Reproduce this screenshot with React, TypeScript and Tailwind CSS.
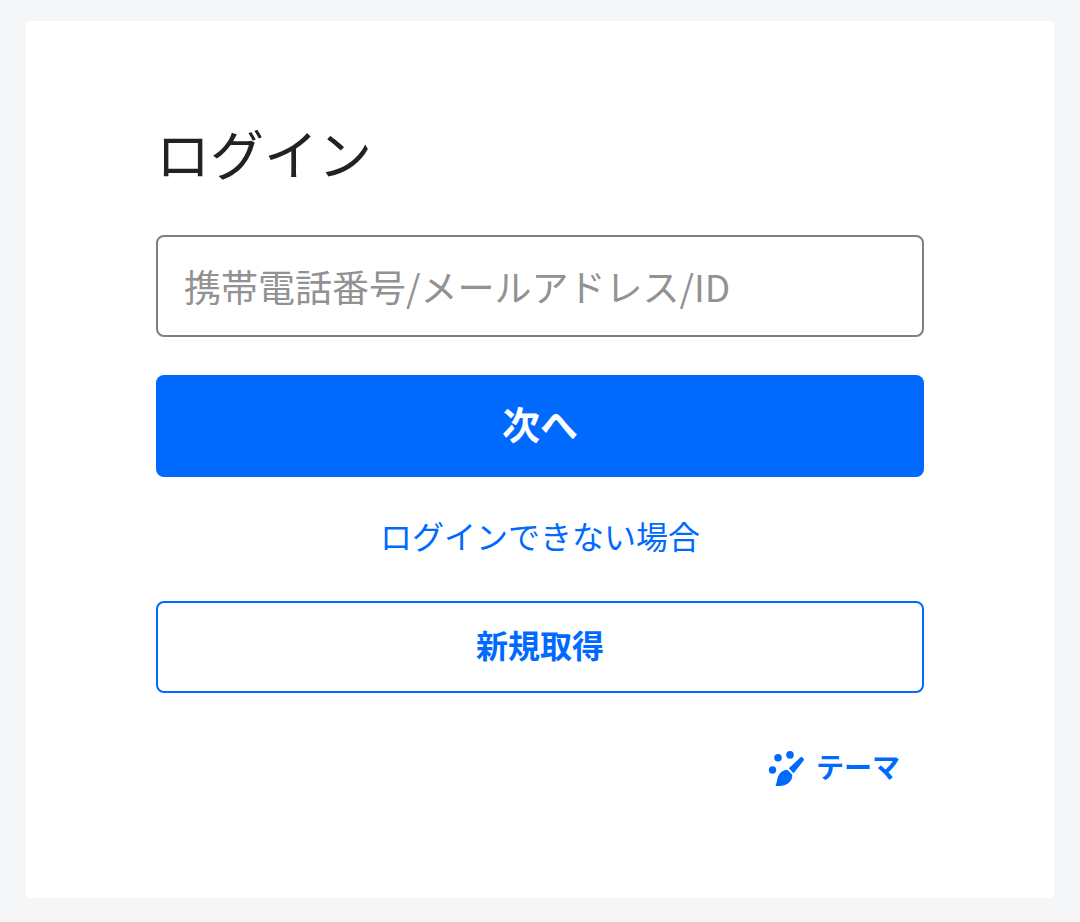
import { useState } from "react";

function BrushIcon() {
  return (
    <svg viewBox="0 0 36 36" className="h-9 w-9 shrink-0" fill="currentColor" aria-hidden="true">
      <circle cx="4.5" cy="19" r="3.7" />
      <circle cx="10" cy="6.8" r="3.8" />
      <circle cx="22" cy="3.9" r="3.8" />
      <path d="M32.600 6.200q1-.8 1.800.1l1.300 1.600q.6.900-.1 1.700L25.600 22.200l-4.800-4.900z" />
      <path d="M19.400 18.800l4.800 5c.4 3.400-1 6.400-4.200 8.600-3 2-6.800 2.800-11.200 2.700-1 0-1.400-.6-1-1.400 1-1.900 1-3.700 1.600-6.100 1.200-5.200 5-8.400 10-8.800z" />
    </svg>
  );
}

export default function App() {
  const [loginId, setLoginId] = useState("");

  return (
    <div className="min-h-screen bg-[#f5f6f8] px-[26px] pt-[21px] pb-6 font-['Liberation_Sans','Noto_Sans_CJK_JP',sans-serif]">
      <main className="rounded-sm bg-white px-[130px] pt-24 pb-[109px]">
        <form onSubmit={(e) => e.preventDefault()} className="flex flex-col">
          <h1 className="text-[54px] leading-[80px] text-[#222]">ログイン</h1>
          <input
            type="text"
            aria-label="携帯電話番号/メールアドレス/ID"
            value={loginId}
            onChange={(e) => setLoginId(e.target.value)}
            placeholder="携帯電話番号/メールアドレス/ID"
            className="mt-[38px] h-[102px] w-full rounded-lg border-2 border-[#7f7f7f] bg-white px-[26px] font-['Noto_Sans_CJK_JP',sans-serif] text-[37px] text-[#222] outline-none placeholder:text-[#929292]"
          />
          <button
            type="submit"
            className="mt-[38px] h-[102px] w-full rounded-lg bg-[#006aff] text-[38px] font-bold text-white"
          >
            次へ
          </button>
          <a href="#help" className="mt-[37px] self-center text-[32px] leading-[48px] text-[#006aff]">
            ログインできない場合
          </a>
          <button
            type="button"
            className="mt-[39px] h-[92px] w-full rounded-lg border-2 border-[#006aff] bg-white text-[32px] font-bold text-[#006aff]"
          >
            新規取得
          </button>
          <button
            type="button"
            className="mt-14 mr-6 flex items-center gap-3 self-end text-[28px] leading-10 font-bold text-[#006aff]"
          >
            <BrushIcon />
            テーマ
          </button>
        </form>
      </main>
    </div>
  );
}
